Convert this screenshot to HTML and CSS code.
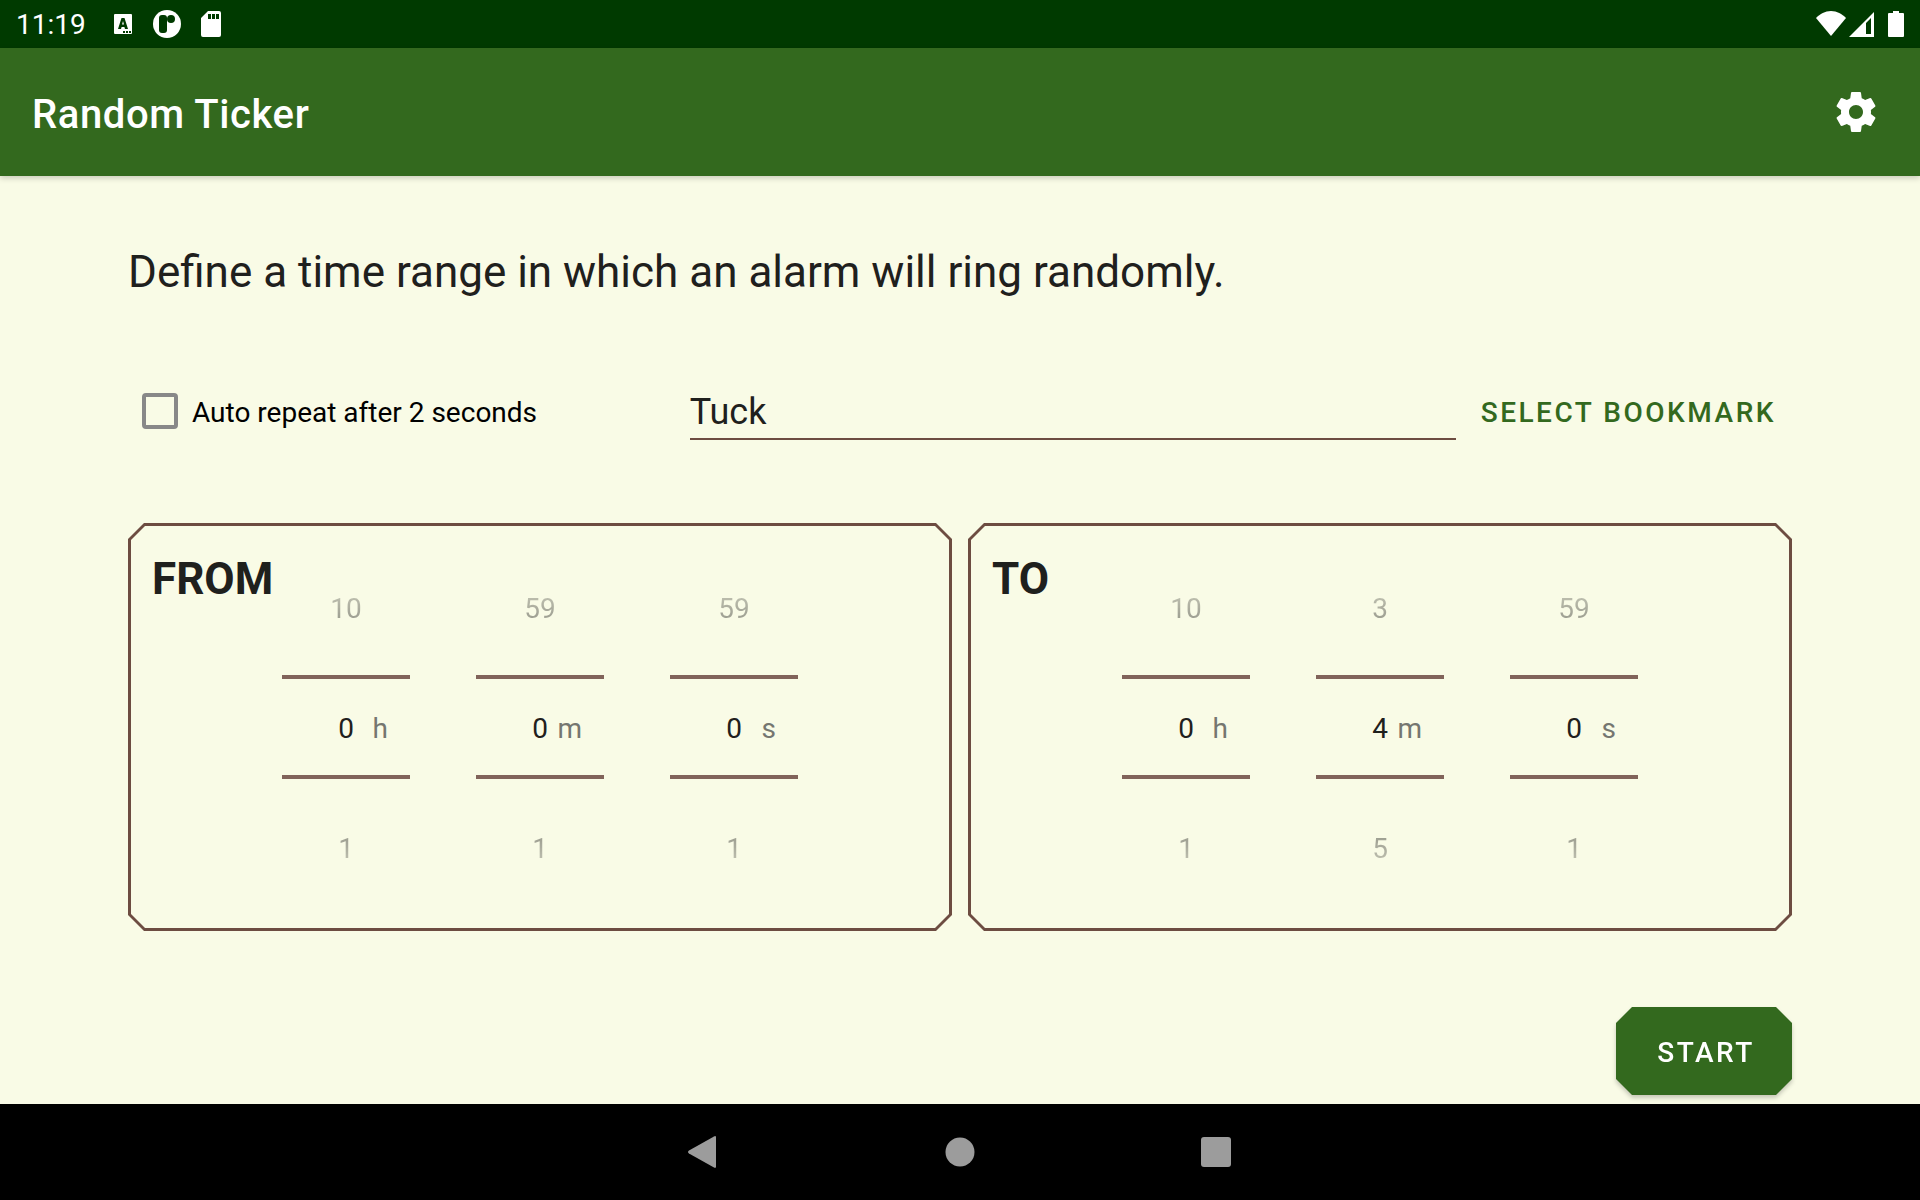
FILE: index.html
```html
<!DOCTYPE html>
<html lang="en">
<head>
<meta charset="utf-8">
<meta name="viewport" content="width=device-width, initial-scale=1">
<title>Random Ticker</title>
<link rel="stylesheet" href="styles.css">
</head>
<body>
<div class="status-bar">
  <div class="status-left">
    <time class="clock">11:19</time>
    <svg class="status-icon" width="28" height="28" viewBox="0 0 28 28" aria-hidden="true">
      <path fill="#fff" fill-rule="evenodd" d="M6 4h16a1 1 0 0 1 1 1v18a1 1 0 0 1-1 1H6a1 1 0 0 1-1-1V5a1 1 0 0 1 1-1zM12.500 8L9 19h3l.6-2h2.800l.6 2h3L15.500 8zM14 11l1 3.600h-2zM14 21v2h2v-2zM17 21v2h2v-2zM20 21v2h2v-2z"/>
    </svg>
    <svg class="status-icon" width="28" height="28" viewBox="0 0 28 28" aria-hidden="true">
      <circle cx="14" cy="14" r="14" fill="#fff"/>
      <rect x="6" y="5" width="8" height="18" rx="3" fill="#003a00"/>
      <circle cx="18" cy="9" r="4" fill="#003a00"/>
    </svg>
    <svg class="status-icon" width="28" height="28" viewBox="0 0 28 28" aria-hidden="true">
      <path fill="#fff" fill-rule="evenodd" d="M11 1h11a2 2 0 0 1 2 2v22a2 2 0 0 1-2 2H6a2 2 0 0 1-2-2V8zM11 4v5h3V4zM15 4v5h3V4zM19 4v5h3V4z"/>
    </svg>
  </div>
  <div class="status-right">
    <svg width="30" height="28" viewBox="0 0 30 28" aria-hidden="true"><path fill="#fff" d="M15 26L0 8C4 4 9 1 15 1s11 3 15 7z"/></svg>
    <svg width="26" height="28" viewBox="0 0 26 28" aria-hidden="true"><path fill="#fff" fill-rule="evenodd" d="M0 27L25 2v25zM17 13V24h5V8z"/></svg>
    <svg class="battery" width="16" height="28" viewBox="0 0 16 28" aria-hidden="true"><path fill="#fff" d="M5 1h6v2h4a1 1 0 0 1 1 1v22a1 1 0 0 1-1 1H1a1 1 0 0 1-1-1V4a1 1 0 0 1 1-1h4z"/></svg>
  </div>
</div>
<header class="app-bar">
  <h1 class="app-title">Random Ticker</h1>
  <button class="icon-button" type="button" aria-label="Settings">
    <svg width="48" height="48" viewBox="0 0 24 24" aria-hidden="true"><path fill="#fff" d="M19.430,12.980c0.040,-0.320 0.070,-0.640 0.070,-0.980s-0.030,-0.660 -0.070,-0.980l2.110,-1.650c0.190,-0.150 0.240,-0.420 0.120,-0.640l-2,-3.460c-0.120,-0.220 -0.390,-0.300 -0.610,-0.220l-2.490,1c-0.520,-0.400 -1.080,-0.730 -1.690,-0.980l-0.380,-2.650C14.460,2.180 14.250,2 14,2h-4c-0.250,0 -0.460,0.180 -0.490,0.420l-0.380,2.650c-0.610,0.250 -1.170,0.590 -1.690,0.980l-2.490,-1c-0.230,-0.090 -0.490,0 -0.610,0.220l-2,3.460c-0.130,0.220 -0.070,0.490 0.120,0.640l2.110,1.650c-0.040,0.320 -0.070,0.650 -0.070,0.980s0.030,0.660 0.070,0.980l-2.110,1.650c-0.190,0.150 -0.240,0.420 -0.120,0.640l2,3.460c0.120,0.220 0.390,0.300 0.610,0.220l2.490,-1c0.520,0.400 1.080,0.730 1.690,0.980l0.380,2.650c0.030,0.240 0.240,0.420 0.490,0.420h4c0.250,0 0.460,-0.180 0.490,-0.420l0.380,-2.650c0.610,-0.250 1.170,-0.590 1.690,-0.980l2.490,1c0.230,0.090 0.490,0 0.610,-0.220l2,-3.460c0.120,-0.220 0.070,-0.490 -0.120,-0.640l-2.110,-1.650zM12,15.500c-1.930,0 -3.500,-1.570 -3.500,-3.500s1.570,-3.500 3.500,-3.500 3.500,1.570 3.500,3.500 -1.570,3.500 -3.500,3.500z"/></svg>
  </button>
</header>
<main class="content">
  <p class="intro">Define a time range in which an alarm will ring randomly.</p>
  <div class="options">
    <label class="repeat"><input class="repeat-box" type="checkbox"><span class="repeat-text">Auto repeat after 2 seconds</span></label>
    <div class="bookmark">
      <input class="bookmark-name" type="text" value="Tuck" aria-label="Bookmark name">
      <button class="text-button" type="button">SELECT BOOKMARK</button>
    </div>
  </div>
  <div class="ranges">
    <section class="card" aria-labelledby="from-title">
      <div class="card-inner">
        <h2 class="card-title" id="from-title">FROM</h2>
        <div class="pickers">
          <div class="picker">
            <button class="step prev" type="button">10</button>
            <div class="current"><input class="value" id="from-h" type="text" inputmode="numeric" value="0"><label class="unit" for="from-h">h</label></div>
            <button class="step next" type="button">1</button>
          </div>
          <div class="picker">
            <button class="step prev" type="button">59</button>
            <div class="current"><input class="value" id="from-m" type="text" inputmode="numeric" value="0"><label class="unit" for="from-m">m</label></div>
            <button class="step next" type="button">1</button>
          </div>
          <div class="picker">
            <button class="step prev" type="button">59</button>
            <div class="current"><input class="value" id="from-s" type="text" inputmode="numeric" value="0"><label class="unit" for="from-s">s</label></div>
            <button class="step next" type="button">1</button>
          </div>
        </div>
      </div>
    </section>
    <section class="card" aria-labelledby="to-title">
      <div class="card-inner">
        <h2 class="card-title" id="to-title">TO</h2>
        <div class="pickers">
          <div class="picker">
            <button class="step prev" type="button">10</button>
            <div class="current"><input class="value" id="to-h" type="text" inputmode="numeric" value="0"><label class="unit" for="to-h">h</label></div>
            <button class="step next" type="button">1</button>
          </div>
          <div class="picker">
            <button class="step prev" type="button">3</button>
            <div class="current"><input class="value" id="to-m" type="text" inputmode="numeric" value="4"><label class="unit" for="to-m">m</label></div>
            <button class="step next" type="button">5</button>
          </div>
          <div class="picker">
            <button class="step prev" type="button">59</button>
            <div class="current"><input class="value" id="to-s" type="text" inputmode="numeric" value="0"><label class="unit" for="to-s">s</label></div>
            <button class="step next" type="button">1</button>
          </div>
        </div>
      </div>
    </section>
  </div>
  <div class="actions">
    <button class="start" type="button">START</button>
  </div>
</main>
<nav class="nav-bar" aria-label="System">
  <button class="nav-button" type="button" aria-label="Back"><svg width="32" height="32" viewBox="0 0 32 32" aria-hidden="true"><path fill="#9c9c9c" d="M1 14.500L26 .4q2-1 2 1v29.200q0 2-2 1L1 17.500q-2-1.500 0-3z"/></svg></button>
  <button class="nav-button" type="button" aria-label="Home"><svg width="32" height="32" viewBox="0 0 32 32" aria-hidden="true"><circle cx="16" cy="16" r="14.500" fill="#9c9c9c"/></svg></button>
  <button class="nav-button" type="button" aria-label="Recent apps"><svg width="32" height="32" viewBox="0 0 32 32" aria-hidden="true"><rect x="1" y="1" width="30" height="30" rx="3" fill="#9c9c9c"/></svg></button>
</nav>
</body>
</html>
```
FILE: styles.css
```css
:root {
  --primary: #33691e;
  --primary-dark: #003a00;
  --surface: #f9fbe6;
  --brown: #6d4c41;
  --ink: #1f201d;
}

* { box-sizing: border-box; }

body {
  display: flex;
  flex-direction: column;
  min-height: 100vh;
  margin: 0;
  background: var(--surface);
  color: var(--ink);
  font: 28px/36px Roboto, sans-serif;
}

button, input {
  margin: 0;
  padding: 0;
  border: 0;
  background: none;
  color: inherit;
  font: inherit;
}

svg { display: block; }

.status-bar {
  display: flex;
  justify-content: space-between;
  height: 48px;
  padding: 0 16px;
  background: var(--primary-dark);
  color: #fff;
}

.status-left, .status-right { display: flex; align-items: center; }
.status-left { gap: 16px; }
.clock { margin-right: 7px; padding-top: 2px; }
.status-right { gap: 3px; }
.battery { margin-left: 10px; }

.app-bar {
  display: flex;
  align-items: center;
  justify-content: space-between;
  height: 128px;
  padding: 0 40px 0 32px;
  background: var(--primary);
  box-shadow: 0 2px 6px rgba(0, 0, 0, .2);
  color: #fff;
}

.app-title {
  margin: 0;
  padding-top: 6px;
  font-size: 40px;
  line-height: 48px;
  font-weight: 500;
  letter-spacing: .015em;
}

.content { flex: 1; padding: 64px 128px 9px; }

.intro { margin: 0; font-size: 44px; line-height: 64px; }

.options {
  display: grid;
  grid-template-columns: 1fr 2fr;
  align-items: center;
  height: 64px;
  margin-top: 76px;
}

.repeat { display: flex; align-items: center; gap: 14px; padding: 0 0 2px 14px; color: #000; }
.repeat-text { padding-top: 4px; }

.repeat-box {
  appearance: none;
  width: 36px;
  height: 36px;
  border: 4px solid #888;
  border-radius: 4px;
}

.bookmark { display: flex; gap: 8px; height: 64px; padding-left: 7px; }

.bookmark-name {
  flex: 1;
  min-width: 0;
  height: 60px;
  padding-top: 6px;
  border-bottom: 2px solid var(--brown);
  font-size: 36px;
}

.text-button {
  padding: 2px 16px 0 17px;
  color: var(--primary);
  font-weight: 500;
  letter-spacing: .09em;
}

.ranges { display: grid; grid-template-columns: 1fr 1fr; gap: 16px; margin-top: 79px; }

.card, .card-inner, .start {
  --cut: 16px;
  clip-path: polygon(
    var(--cut) 0, calc(100% - var(--cut)) 0, 100% var(--cut), 100% calc(100% - var(--cut)),
    calc(100% - var(--cut)) 100%, var(--cut) 100%, 0 calc(100% - var(--cut)), 0 var(--cut));
}

.card { padding: 3px; background: var(--brown); }

.card-inner {
  --cut: 14px;
  display: grid;
  grid-template-columns: 1fr auto 1fr;
  padding: 15px 0 11px;
  background: var(--surface);
}

.card-title { margin: 8px 0 0 21px; font-size: 44px; line-height: 60px; font-weight: 700; }

.pickers { display: flex; gap: 66px; }
.picker { display: flex; flex-direction: column; width: 128px; }

.step { padding-top: 2px; color: rgba(31, 32, 29, .7); }
.prev { height: 134px; mask-image: linear-gradient(to bottom, transparent 10%, #000 90%); }
.next { height: 138px; mask-image: linear-gradient(to top, transparent 10%, #000 90%); }

.current {
  display: grid;
  grid-template-columns: 1fr 32px 1fr;
  align-items: center;
  height: 104px;
  padding-top: 4px;
  border: solid #81635a;
  border-width: 4px 0;
}

.value { grid-column: 2; width: 32px; text-align: center; }
.unit { justify-self: end; padding-right: 22px; color: #757670; }

.actions {
  display: flex;
  justify-content: flex-end;
  margin-top: 76px;
  filter: drop-shadow(0 3px 2px rgba(0, 0, 0, .2));
}

.start {
  width: 176px;
  height: 88px;
  padding: 4px 0 0 4px;
  background: var(--primary);
  color: #fff;
  font-weight: 500;
  letter-spacing: .09em;
}

.nav-bar { display: flex; justify-content: center; height: 96px; background: #000; }
.nav-button { display: grid; place-items: center; width: 256px; }
```
